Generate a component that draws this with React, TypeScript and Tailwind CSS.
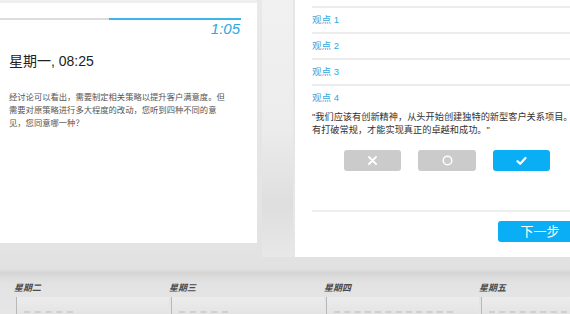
import React from "react";

const font = "font-['Liberation_Sans','Noto_Sans_CJK_SC',sans-serif]";

function XIcon() {
  return (
    <svg width="9" height="9" viewBox="0 0 9 9">
      <path d="M1 1L8 8M8 1L1 8" stroke="#fff" strokeWidth="1.8" strokeLinecap="round" />
    </svg>
  );
}
function OIcon() {
  return (
    <svg width="11" height="11" viewBox="0 0 11 11">
      <circle cx="5.5" cy="5.5" r="4.3" stroke="#fff" strokeWidth="1.5" fill="none" />
    </svg>
  );
}
function CheckIcon() {
  return (
    <svg width="11" height="10" viewBox="0 0 11 10">
      <path d="M1.5 5.2L4.2 7.8L9.5 2" stroke="#fff" strokeWidth="2.2" fill="none" strokeLinecap="round" strokeLinejoin="round" />
    </svg>
  );
}

function Day({ label, dash }: { label: string; dash: number }) {
  return (
    <div className="w-[155px] flex-none flex flex-col">
      <div className="h-[10px] leading-[10px] text-[9px] italic font-bold text-[#4a4a4a]">{label}</div>
      <div className="mt-[4px] ml-[2px] h-[17px] border-l border-[#b8b8b8] bg-[linear-gradient(to_bottom,#ececec,#e4e4e4)]">
        <div className="mt-[14px] ml-[7px] border-t-2 border-dashed border-[#cfcfcf]" style={{ width: dash }} />
      </div>
    </div>
  );
}

export default function App() {
  return (
    <div className={`w-[570px] h-[314px] overflow-hidden bg-[#e3e3e3] ${font}`}>
      <div className="flex items-start h-[257px] bg-[linear-gradient(to_bottom,#efefef,#e8e8e8_80%,#e2e2e2)]">
        {/* left card */}
        <div className="w-[257px] h-[240px] mt-[3px] bg-white flex-none flex flex-col">
          <div className="mt-[15px] mr-[16px] h-[2px] flex">
            <div className="w-[109px] bg-[#dcdcdc]" />
            <div className="flex-1 bg-[#3db4ea]" />
          </div>
          <div className="mr-[17px] mt-[1px] text-right text-[15px] leading-[16px] italic text-[#2aa9e3] font-['Liberation_Sans',sans-serif]">
            1:05
          </div>
          <div className="ml-[9px] mt-[15px] text-[14px] leading-[18px] text-[#222]">星期一, 08:25</div>
          <div className="ml-[9px] mt-[21px] text-[8.3px] leading-[13px] text-[#555] whitespace-nowrap">
            经讨论可以看出，需要制定相关策略以提升客户满意度。但
            <br />
            需要对原策略进行多大程度的改动，您听到四种不同的意
            <br />
            见，您同意哪一种？
          </div>
        </div>
        {/* gap */}
        <div className="w-[38px] h-[257px] flex-none flex">
          <div className="w-[5px] bg-[linear-gradient(to_bottom,#e9e9e9,#e2e2e2)]" />
          <div className="flex-1 bg-[linear-gradient(to_bottom,#f1f1f1,#ececec_50%,#dedede_80%,#e8e8e8)]" />
          <div className="w-[2px] bg-[#e6e6e6]" />
        </div>
        {/* right card */}
        <div className="w-[300px] h-[257px] flex-none bg-white pl-[17px] flex flex-col">
          <div className="mt-[6px]">
            {["观点 1", "观点 2", "观点 3", "观点 4"].map((t) => (
              <div key={t} className="border-t-2 border-[#ededed]">
                <div className="h-[24px] flex items-center text-[9.5px] text-[#2ea8df]">{t}</div>
              </div>
            ))}
          </div>
          <div className="mt-[1px] text-[9.2px] leading-[13px] text-[#333] whitespace-nowrap">
            "我们应该有创新精神，从头开始创建独特的新型客户关系项目。只
            <br />
            有打破常规，才能实现真正的卓越和成功。"
          </div>
          <div className="mt-[13px] ml-[32px] flex gap-[17px]">
            <div className="w-[57px] h-[21px] rounded-[3px] bg-[#cbcbcb] flex items-center justify-center">
              <XIcon />
            </div>
            <div className="w-[58px] h-[21px] rounded-[3px] bg-[#cbcbcb] flex items-center justify-center">
              <OIcon />
            </div>
            <div className="w-[57px] h-[21px] rounded-[3px] bg-[#0aaef5] flex items-center justify-center">
              <CheckIcon />
            </div>
          </div>
          <div className="mt-[39px] border-t-2 border-[#efefef]" />
          <div className="mt-[9px] ml-[186px] w-[84px] h-[21px] rounded-[3px] bg-[#0aaef5] flex items-center justify-center text-white text-[13px]">
            下一步
          </div>
        </div>
      </div>
      {/* bottom */}
      <div className="h-[57px] flex flex-col bg-[linear-gradient(to_bottom,#e2e2e2_0px,#e1e1e1_12px,#d4d4d4_16px,#dedede_21px,#e3e3e3_28px,#e6e6e6)]">
        <div className="mt-[26px] pl-[14px] flex">
          <Day label="星期二" dash={49} />
          <Day label="星期三" dash={49} />
          <Day label="星期四" dash={119} />
          <Day label="星期五" dash={119} />
        </div>
      </div>
    </div>
  );
}
